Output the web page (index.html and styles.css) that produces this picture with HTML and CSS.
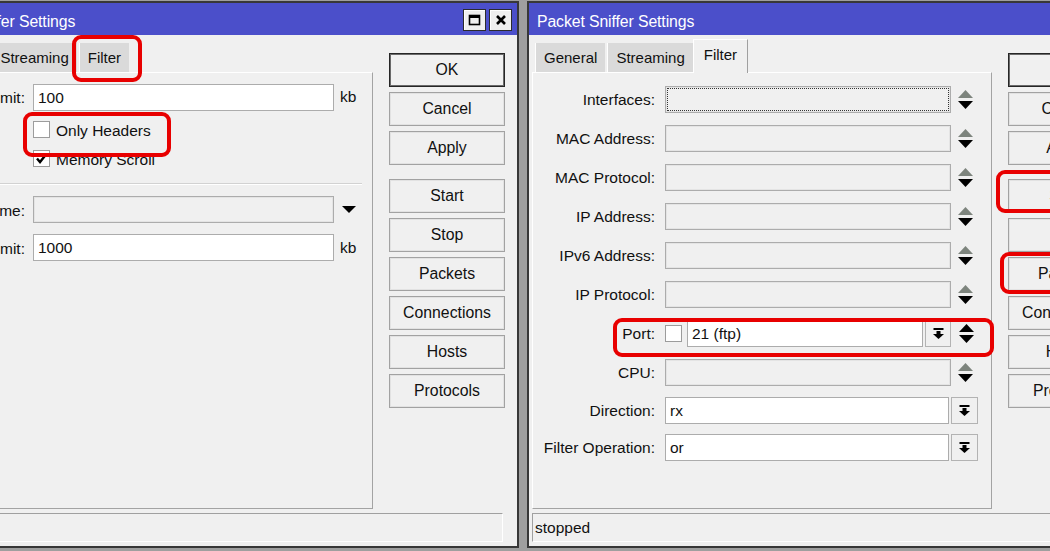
FILE: index.html
```html
<!DOCTYPE html>
<html>
<head>
  <meta charset="UTF-8">
  <title>Packet Sniffer Settings</title>
  <link rel="stylesheet" href="styles.css">
</head>
<body>

<div class="desk">

  <!-- general tab window -->
  <div class="win">
    <div class="titlebar">
      <span class="title">Packet Sniffer Settings</span>
      <div class="winBtns">
        <span class="winBtn">
          <svg width="13" height="12" viewBox="0 0 13 12"><rect x="1.5" y="1.5" width="10" height="9" fill="none" stroke="#000" stroke-width="1.6"/><rect x="1" y="1" width="11" height="3" fill="#000"/></svg>
        </span>
        <span class="winBtn">
          <svg width="12" height="12" viewBox="0 0 12 12"><path d="M2 2 L10 10 M10 2 L2 10" stroke="#000" stroke-width="2.6"/></svg>
        </span>
      </div>
    </div>
    <div class="main">
      <div class="leftCol">
        <div class="tabs">
          <div class="tab active">General</div>
          <div class="tab">Streaming</div>
          <div class="tab">Filter</div>
        </div>
        <div class="panel">
          <div class="gRow first">
            <span class="gLbl">Memory Limit:</span>
            <div class="field on gField">100</div>
            <span class="unit">kb</span>
          </div>
          <div class="chkRow first">
            <span class="chk"></span>
            <span class="chkText">Only Headers</span>
          </div>
          <div class="chkRow">
            <span class="chk">
              <svg width="13" height="13" viewBox="0 0 13 13"><path d="M2 6.5 L5 10 L11 2.5" fill="none" stroke="#000" stroke-width="2.4"/></svg>
            </span>
            <span class="chkText">Memory Scroll</span>
          </div>
          <div class="sep"></div>
          <div class="gRow">
            <span class="gLbl">File Name:</span>
            <div class="field gField"></div>
            <svg class="drop" width="14" height="7" viewBox="0 0 14 7"><polygon points="0,0 14,0 7,7" fill="#000"/></svg>
          </div>
          <div class="gRow">
            <span class="gLbl">File Limit:</span>
            <div class="field on gField">1000</div>
            <span class="unit">kb</span>
          </div>
        </div>
      </div>
      <div class="btnCol">
        <button class="btn default">OK</button>
        <button class="btn">Cancel</button>
        <button class="btn group">Apply</button>
        <button class="btn">Start</button>
        <button class="btn">Stop</button>
        <button class="btn">Packets</button>
        <button class="btn">Connections</button>
        <button class="btn">Hosts</button>
        <button class="btn">Protocols</button>
      </div>
    </div>
    <div class="status"></div>
  </div>

  <!-- filter tab window -->
  <div class="win">
    <div class="titlebar">
      <span class="title">Packet Sniffer Settings</span>
      <div class="winBtns">
        <span class="winBtn">
          <svg width="13" height="12" viewBox="0 0 13 12"><rect x="1.5" y="1.5" width="10" height="9" fill="none" stroke="#000" stroke-width="1.6"/><rect x="1" y="1" width="11" height="3" fill="#000"/></svg>
        </span>
        <span class="winBtn">
          <svg width="12" height="12" viewBox="0 0 12 12"><path d="M2 2 L10 10 M10 2 L2 10" stroke="#000" stroke-width="2.6"/></svg>
        </span>
      </div>
    </div>
    <div class="main">
      <div class="leftCol">
        <div class="tabs">
          <div class="tab">General</div>
          <div class="tab">Streaming</div>
          <div class="tab active">Filter</div>
        </div>
        <div class="panel filterForm">
          <div class="row">
            <span class="lbl">Interfaces:</span>
            <div class="field focus"></div>
            <svg class="spin" width="15" height="19" viewBox="0 0 15 19"><polygon points="7.5,0 15,8 0,8" fill="#7d847d"/><polygon points="0,11 15,11 7.5,19" fill="#000"/></svg>
          </div>
          <div class="row">
            <span class="lbl">MAC Address:</span>
            <div class="field"></div>
            <svg class="spin" width="15" height="19" viewBox="0 0 15 19"><polygon points="7.5,0 15,8 0,8" fill="#7d847d"/><polygon points="0,11 15,11 7.5,19" fill="#000"/></svg>
          </div>
          <div class="row">
            <span class="lbl">MAC Protocol:</span>
            <div class="field"></div>
            <svg class="spin" width="15" height="19" viewBox="0 0 15 19"><polygon points="7.5,0 15,8 0,8" fill="#7d847d"/><polygon points="0,11 15,11 7.5,19" fill="#000"/></svg>
          </div>
          <div class="row">
            <span class="lbl">IP Address:</span>
            <div class="field"></div>
            <svg class="spin" width="15" height="19" viewBox="0 0 15 19"><polygon points="7.5,0 15,8 0,8" fill="#7d847d"/><polygon points="0,11 15,11 7.5,19" fill="#000"/></svg>
          </div>
          <div class="row">
            <span class="lbl">IPv6 Address:</span>
            <div class="field"></div>
            <svg class="spin" width="15" height="19" viewBox="0 0 15 19"><polygon points="7.5,0 15,8 0,8" fill="#7d847d"/><polygon points="0,11 15,11 7.5,19" fill="#000"/></svg>
          </div>
          <div class="row">
            <span class="lbl">IP Protocol:</span>
            <div class="field"></div>
            <svg class="spin" width="15" height="19" viewBox="0 0 15 19"><polygon points="7.5,0 15,8 0,8" fill="#7d847d"/><polygon points="0,11 15,11 7.5,19" fill="#000"/></svg>
          </div>
          <div class="row">
            <span class="lbl">Port:</span>
            <span class="chk portChk"></span>
            <div class="field on portField">21 (ftp)</div>
            <span class="ddBtn">
              <svg width="11" height="11" viewBox="0 0 11 11"><rect x="0.5" y="0" width="10" height="2" fill="#000"/><rect x="3.5" y="3" width="4" height="3" fill="#000"/><polygon points="0,6 11,6 5.5,11" fill="#000"/></svg>
            </span>
            <svg class="spin near" width="15" height="19" viewBox="0 0 15 19"><polygon points="7.5,0 15,8 0,8" fill="#000"/><polygon points="0,11 15,11 7.5,19" fill="#000"/></svg>
          </div>
          <div class="row">
            <span class="lbl">CPU:</span>
            <div class="field"></div>
            <svg class="spin" width="15" height="19" viewBox="0 0 15 19"><polygon points="7.5,0 15,8 0,8" fill="#7d847d"/><polygon points="0,11 15,11 7.5,19" fill="#000"/></svg>
          </div>
          <div class="row up1">
            <span class="lbl">Direction:</span>
            <div class="field on shortField">rx</div>
            <span class="ddBtn wide">
              <svg width="11" height="11" viewBox="0 0 11 11"><rect x="0.5" y="0" width="10" height="2" fill="#000"/><rect x="3.5" y="3" width="4" height="3" fill="#000"/><polygon points="0,6 11,6 5.5,11" fill="#000"/></svg>
            </span>
          </div>
          <div class="row up2">
            <span class="lbl">Filter Operation:</span>
            <div class="field on shortField">or</div>
            <span class="ddBtn wide">
              <svg width="11" height="11" viewBox="0 0 11 11"><rect x="0.5" y="0" width="10" height="2" fill="#000"/><rect x="3.5" y="3" width="4" height="3" fill="#000"/><polygon points="0,6 11,6 5.5,11" fill="#000"/></svg>
            </span>
          </div>
        </div>
      </div>
      <div class="btnCol">
        <button class="btn default">OK</button>
        <button class="btn">Cancel</button>
        <button class="btn group">Apply</button>
        <button class="btn">Start</button>
        <button class="btn">Stop</button>
        <button class="btn">Packets</button>
        <button class="btn">Connections</button>
        <button class="btn">Hosts</button>
        <button class="btn">Protocols</button>
      </div>
    </div>
    <div class="status">stopped</div>
  </div>

</div>

<!-- red highlight marks drawn over the screenshot -->
<div class="mark markFilterTab"></div>
<div class="mark markHeaders"></div>
<div class="mark markPort"></div>
<div class="mark markStart"></div>
<div class="mark markPackets"></div>

</body>
</html>
```

FILE: styles.css
```css
body {
  margin: 0;
  height: 551px;
  overflow: hidden;
  position: relative;
  background: #9f9f9f;
  color: #111;
  font-family: "Liberation Sans", Arial, sans-serif;
  font-size: 15.5px;
}

.desk {
  display: flex;
  gap: 8px;
  margin-left: -92px;
  padding-top: 1px;
}

.win {
  flex: 0 0 auto;
  width: 611px;
  height: 547px;
  box-sizing: border-box;
  border: 2px solid #383838;
  background: #f0f0f0;
}

.titlebar {
  height: 32px;
  box-sizing: border-box;
  background: #4b4fca;
  color: #fff;
  display: flex;
  align-items: center;
  justify-content: space-between;
  padding: 1px 5px 0 8px;
}

.title {
  font-size: 15.8px;
  padding-top: 4px;
  letter-spacing: -0.1px;
}

.winBtns {
  display: flex;
  gap: 3px;
}

.winBtn {
  width: 23px;
  height: 22px;
  box-sizing: border-box;
  background: #efefef;
  border: 1px solid #2b2b2b;
  box-shadow: inset 1px 1px 0 #fff;
  display: flex;
  align-items: center;
  justify-content: center;
}

.main {
  display: flex;
  padding-left: 3px;
  height: 474px;
}

.leftCol {
  width: 460px;
}

.tabs {
  height: 37px;
  display: flex;
  align-items: flex-end;
  padding-left: 3px;
  font-size: 15px;
}

.tab {
  height: 29px;
  line-height: 29px;
  padding: 0 8px;
  margin-right: 2px;
  box-sizing: border-box;
  background: #dadada;
  border-left: 1px solid #fff;
}

.tab.active {
  height: 34px;
  line-height: 30px;
  padding: 0 10px;
  margin-left: -2px;
  margin-bottom: -1px;
  background: #f0f0f0;
  border: 1px solid #fff;
  border-right-color: #a0a0a0;
  border-bottom: none;
  position: relative;
  z-index: 1;
}

.panel {
  height: 437px;
  box-sizing: border-box;
  border: 1px solid;
  border-color: #fff #a3a3a3 #a3a3a3 #fff;
}

/* inputs */
.field {
  height: 27px;
  box-sizing: border-box;
  border: 1px solid #acacac;
  box-shadow: inset 0 0 0 1px #e4e4e4;
  background: #f0f0f0;
  padding-left: 4px;
  line-height: 26px;
  white-space: nowrap;
}

.field.on {
  background: #fff;
  box-shadow: none;
}

.field.focus {
  outline: 1px dotted #333;
  outline-offset: -3px;
}

.chk {
  width: 17px;
  height: 17px;
  box-sizing: border-box;
  border: 1px solid #9c9c9c;
  background: #fff;
  display: flex;
  align-items: center;
  justify-content: center;
  flex: 0 0 auto;
}

/* general tab */
.gRow {
  display: flex;
  align-items: center;
  height: 27px;
  margin-top: 11px;
}

.gRow.first {
  height: 26px;
}

.gLbl {
  width: 111px;
  margin-right: 8px;
  text-align: right;
  white-space: nowrap;
  padding-top: 2px;
}

.gField {
  width: 301px;
}

.unit {
  margin-left: 6px;
}

.drop {
  margin-left: 8px;
}

.chkRow {
  display: flex;
  align-items: center;
  gap: 6px;
  height: 17px;
  margin-top: 12px;
  padding-left: 119px;
}

.chkRow.first {
  margin-top: 11px;
}

.chkText {
  padding-top: 3px;
}

.sep {
  margin: 16px 10px 0 0;
  height: 1px;
  background: #d2d2d2;
  border-bottom: 1px solid #fff;
}

/* filter tab */
.filterForm {
  padding-top: 13px;
  display: flex;
  flex-direction: column;
  gap: 12px;
}

.row {
  display: flex;
  align-items: center;
  height: 27px;
}

.row.up1 {
  margin-top: -1px;
}

.row.up2 {
  margin-top: -2px;
}

.lbl {
  width: 122px;
  margin-right: 10px;
  text-align: right;
  white-space: nowrap;
}

.row .field {
  width: 286px;
}

.spin {
  margin-left: 7px;
}

.spin.near {
  margin-left: 8px;
}

.portChk {
  margin-right: 5px;
}

.row .portField {
  width: 236px;
}

.row .shortField {
  width: 284px;
}

.ddBtn {
  width: 26px;
  height: 27px;
  margin-left: 2px;
  box-sizing: border-box;
  border: 1px solid #b3b3b3;
  background: #f0f0f0;
  display: flex;
  align-items: center;
  justify-content: center;
}

.ddBtn.wide {
  width: 27px;
}

/* buttons */
.btnCol {
  margin: 18px 0 0 16px;
  display: flex;
  flex-direction: column;
}

.btn {
  width: 116px;
  height: 34px;
  margin-bottom: 5px;
  padding: 0;
  background: #f0f0f0;
  border: 1px solid #a2a2a2;
  box-shadow: inset 0 0 0 1px #e2e2e2;
  color: #111;
  font-family: "Liberation Sans", Arial, sans-serif;
  font-size: 15.8px;
}

.btn.default {
  border-color: #262626;
  box-shadow: inset 0 0 0 1px #6a6a6a;
}

.btn.group {
  margin-bottom: 14px;
}

.status {
  height: 29px;
  margin: 4px 14px 0 3px;
  box-sizing: border-box;
  border: 1px solid;
  border-color: #a0a0a0 #fff #fff #a0a0a0;
  padding-left: 2px;
  line-height: 27px;
}

/* annotation boxes */
.mark {
  position: absolute;
  box-sizing: border-box;
  border: 4px solid #e80000;
  border-radius: 9px;
  z-index: 5;
}

.markFilterTab {
  left: 72px;
  top: 35px;
  width: 70px;
  height: 47px;
}

.markHeaders {
  left: 23px;
  top: 112px;
  width: 148px;
  height: 45px;
}

.markPort {
  left: 613px;
  top: 318px;
  width: 381px;
  height: 39px;
}

.markStart {
  left: 996px;
  top: 170px;
  width: 80px;
  height: 43px;
}

.markPackets {
  left: 1000px;
  top: 252px;
  width: 80px;
  height: 42px;
}
```
